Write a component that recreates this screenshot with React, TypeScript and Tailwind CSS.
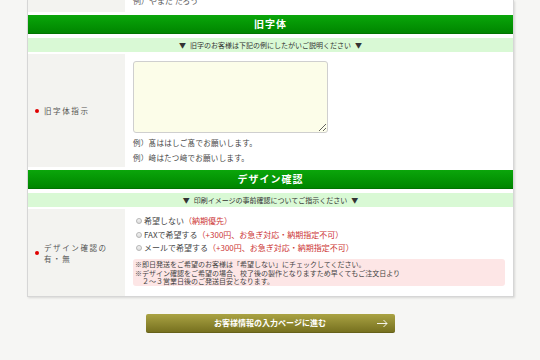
const font = { fontFamily: '"Noto Sans CJK JP", "Noto Sans", sans-serif' };

const SectionHead = ({ title, note }: { title: string; note: string }) => (
  <>
    <div className="h-[19px] bg-gradient-to-b from-[#0ba60b] to-[#008600] border-b border-[#007400] flex items-center justify-center text-white text-[10px] font-bold tracking-[1px] leading-none">
      {title}
    </div>
    <div className="mt-[4px] h-[14px] bg-[#d9f9d5] flex items-center justify-center gap-[4px] text-[7px] text-[#333] leading-none">
      <span>▼</span>
      <span>{note}</span>
      <span>▼</span>
    </div>
  </>
);

const Label = ({ children }: { children: React.ReactNode }) => (
  <div className="w-[97px] shrink-0 bg-[#f3f3f0] flex items-center pl-[7px]">
    <span className="w-[4px] h-[4px] rounded-full bg-[#e00000] shrink-0" />
    <div className="ml-[5px] text-[7.5px] leading-[11px] text-[#555] tracking-[1.6px]">{children}</div>
  </div>
);

const Radio = ({ text, note }: { text: string; note: string }) => (
  <label className="flex items-center h-[13.5px] text-[8px] text-[#444]">
    <span className="w-[6px] h-[6px] rounded-full border border-[#b5b5b5] bg-gradient-to-b from-[#f4f4f4] to-[#dcdcdc] ml-[3px] mr-[2px]" />
    <span>{text}</span>
    <span className="text-[#cc3333]">{note}</span>
  </label>
);

export default function App() {
  return (
    <div className="w-[540px] h-[360px] overflow-hidden bg-[#f6f6f4]" style={font}>
      <div className="ml-[27px] w-[487px] bg-white border border-t-0 border-[#d6d6d6] shadow-[1px_1px_2px_rgba(0,0,0,0.12)]">
        {/* tail of the previous row */}
        <div className="flex h-[12px] overflow-hidden">
          <div className="w-[97px] bg-[#f3f3f0]" />
          <div className="pl-[8px] -mt-[5px] text-[8px] leading-[12px] text-[#555]">例）やまだ たろう</div>
        </div>

        <div className="mt-[3px]">
          <SectionHead title="旧字体" note="旧字のお客様は下記の例にしたがいご説明ください" />
        </div>

        <div className="mt-[2px] flex h-[113px]">
          <Label>旧字体指示</Label>
          <div className="pl-[8px] pt-[7px]">
            <textarea
              readOnly
              className="block w-[195px] h-[72px] bg-[#fcfde9] border border-[#cfcfcf] rounded-[3px] outline-none"
            />
            <div className="mt-[2px] text-[7.5px] leading-[15px] text-[#444] tracking-[0.3px]">
              <div>例）髙ははしご髙でお願いします。</div>
              <div>例）﨑はたつ﨑でお願いします。</div>
            </div>
          </div>
        </div>

        <div className="mt-[3px]">
          <SectionHead title="デザイン確認" note="印刷イメージの事前確認についてご指示ください" />
        </div>

        <div className="mt-[2px] flex h-[87px]">
          <Label>
            デザイン確認の
            <br />
            有・無
          </Label>
          <div className="pl-[8px] pt-[5.5px] flex-1 pr-[8px]">
            <Radio text="希望しない" note="（納期優先）" />
            <Radio text="FAXで希望する" note="（+300円、お急ぎ対応・納期指定不可）" />
            <Radio text="メールで希望する" note="（+300円、お急ぎ対応・納期指定不可）" />
            <div className="mt-[4px] h-[27px] rounded-[3px] bg-[#fde6e6] px-[2px] pt-[1px] text-[7px] leading-[8.5px] text-[#444]">
              <div>※即日発送をご希望のお客様は「希望しない」にチェックしてください。</div>
              <div>※デザイン確認をご希望の場合、校了後の製作となりますため早くてもご注文日より</div>
              <div className="pl-[7px]">２～３営業日後のご発送目安となります。</div>
            </div>
          </div>
        </div>
      </div>

      <div className="mt-[17px] flex justify-center">
        <button
          type="button"
          className="relative w-[249px] h-[19px] rounded-[2px] bg-gradient-to-b from-[#aaa343] to-[#77711f] border-b border-[#666119] text-white text-[8px] font-bold leading-none flex items-center justify-center"
        >
          お客様情報の入力ページに進む
          <svg className="absolute right-[7px] top-[5px]" width="11" height="9" viewBox="0 0 11 9" fill="none" stroke="#fff" strokeWidth="0.9">
            <path d="M0 4.5H10M6.5 1L10 4.5L6.5 8" />
          </svg>
        </button>
      </div>
    </div>
  );
}
